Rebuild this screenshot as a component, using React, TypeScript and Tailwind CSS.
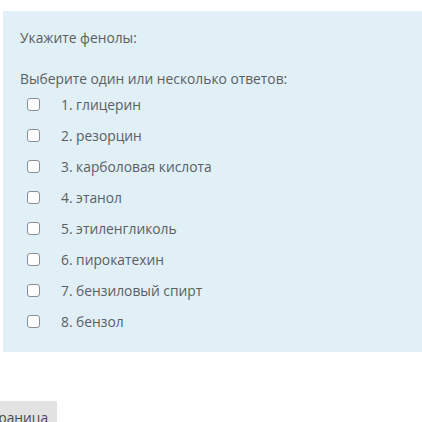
const OPTIONS = [
  "1. глицерин",
  "2. резорцин",
  "3. карболовая кислота",
  "4. этанол",
  "5. этиленгликоль",
  "6. пирокатехин",
  "7. бензиловый спирт",
  "8. бензол",
];

export default function App() {
  return (
    <div
      className="w-[422px] h-[422px] overflow-hidden bg-white text-[#5a5f63] text-[13.8px] leading-5"
      style={{ fontFamily: '"Open Sans", "Liberation Sans", sans-serif' }}
    >
      <div className="pt-[11px] pl-[3px]">
        {/* Question panel */}
        <div className="w-[440px] bg-[#e1eff7] pl-[17px] pt-[17px] pb-[15px]">
          <p>Укажите фенолы:</p>
          <p className="mt-[21px]">Выберите один или несколько ответов:</p>
          <div className="flex flex-col">
            {OPTIONS.map((opt) => (
              <label key={opt} className="h-[31px] flex items-center">
                <span className="ml-[7px] w-[13px] h-[13px] rounded-[3px] border border-[#8a8f94] bg-white shrink-0" />
                <span className="ml-[21px]">{opt}</span>
              </label>
            ))}
          </div>
        </div>
      </div>

      {/* Next page button, clipped on the left */}
      <div className="mt-[49px] -ml-[25px]">
        <button className="bg-[#e2e2e2] pl-[8px] pr-[9px] pt-[7px] pb-[8px] text-[#4a4a4a] leading-5">
          Страница
        </button>
      </div>
    </div>
  );
}
